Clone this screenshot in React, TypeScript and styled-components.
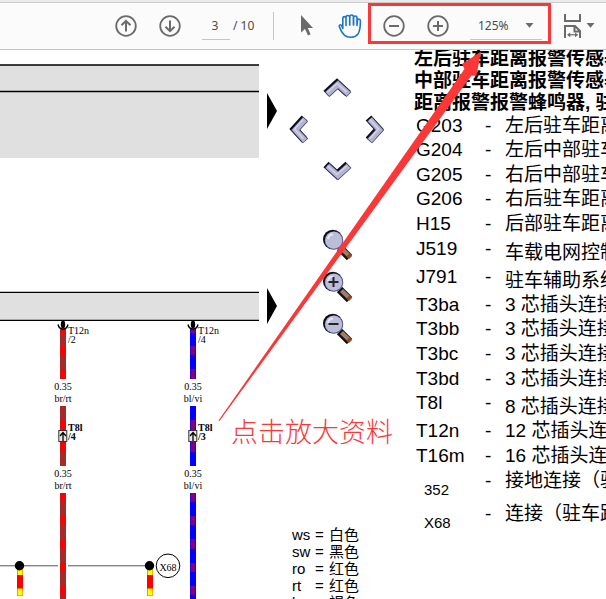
import React from "react";
import styled, { createGlobalStyle } from "styled-components";

const RED = "#fb3737";
const SANS = `"Liberation Sans", "Noto Sans CJK SC", sans-serif`;

const GlobalStyle = createGlobalStyle`
  *, *::before, *::after { box-sizing: border-box; }
  body { margin: 0; background: #fff; color: #000; font-family: ${SANS}; }
`;

const Viewer = styled.div`
  position: relative;
  display: flex;
  flex-direction: column;
  height: 100vh;
  overflow: hidden;
`;

const Toolbar = styled.header`
  display: flex;
  flex: none;
  align-items: center;
  height: 50px;
  padding-left: 115px;
  border-bottom: 1px solid #c6c6c6;
  background: #fbfbfb;
  box-shadow: inset 0 2px #ebebeb, inset 0 3px #cbcbcb;
  padding-top: 2px;
  font: 12px "Noto Sans", sans-serif;
  color: #4b4b4b;
`;

const ToolButton = styled.button<{ $gap?: number }>`
  display: flex;
  flex: none;
  align-items: center;
  justify-content: center;
  padding: 0;
  margin: 0 0 0 ${(p) => p.$gap ?? 0}px;
  border: 0;
  background: none;
  color: #6b6b6b;
`;

const PageField = styled.input`
  width: 28px;
  height: 28px;
  margin-left: 21px;
  padding: 0 2px 0 0;
  border: 0;
  border-bottom: 1px solid #c6c6c6;
  background: none;
  color: inherit;
  font: inherit;
  text-align: center;
`;

const PageTotal = styled.span`
  width: 41px;
  padding-left: 3px;
  white-space: nowrap;
`;

const Divider = styled.span`
  width: 1px;
  height: 28px;
  margin-left: 2px;
  background: #c6c6c6;
`;

const ZoomGroup = styled.div`
  display: flex;
  flex: none;
  align-items: center;
  align-self: flex-start;
  width: 183px;
  height: 41px;
  margin: 1px 0 0 6px;
  padding: 5px 6px 0 12px;
  border: 3px solid ${RED};
`;

const ZoomField = styled.label`
  display: grid;
  width: 72px;
  height: 28px;
  margin-left: 21px;
  border-bottom: 1px solid #c6c6c6;
  > * { grid-area: 1 / 1; align-self: center; }
  > svg { justify-self: end; margin-right: 8px; pointer-events: none; }
`;

const ZoomSelect = styled.select`
  width: 100%;
  height: 27px;
  padding: 0 0 0 8px;
  border: 0;
  appearance: none;
  background: none;
  color: inherit;
  font: 12px "Noto Sans", sans-serif;
`;

const Sheet = styled.main`
  display: grid;
  flex: 1;
  grid-template-columns: 282px 124px minmax(0, 1fr);
  min-height: 0;
  overflow: hidden;
`;

const Schematic = styled.svg`
  display: block;
  text { font: 10px "Liberation Serif", serif; }
  .strong { font-weight: bold; }
`;

const Controls = styled.section`
  display: flex;
  flex-direction: column;
  padding: 29px 0 0 4px;
`;

const PanPad = styled.nav`
  display: grid;
  grid-template: 20px 62px 20px / 28px 47px 28px;
  place-items: center;
`;

const PadButton = styled.button<{ $area: string }>`
  display: flex;
  grid-area: ${(p) => p.$area};
  padding: 0;
  border: 0;
  background: none;
`;

const Lenses = styled.div`
  display: flex;
  flex-direction: column;
  gap: 10px;
  margin: 48px 0 0 36px;
`;

const LensButton = styled.button`
  display: flex;
  width: 32px;
  padding: 0;
  border: 0;
  background: none;
`;

const ColorTable = styled.table`
  width: 80px;
  margin: 181px 0 0 6px;
  border-collapse: collapse;
  font-size: 15px;
  line-height: 17px;
  white-space: nowrap;
  td, th { height: 17px; padding: 0; font-weight: normal; text-align: left; }
  tr > :first-child { width: 23px; }
  tr > :nth-child(2) { width: 14px; }
`;

const Legend = styled.section`
  padding-left: 8px;
  overflow: hidden;
  white-space: nowrap;
`;

const LegendTitle = styled.h1`
  margin: -2px 0 0;
  font-size: 19px;
  font-weight: bold;
  line-height: 22px;
`;

const LegendTable = styled.table`
  width: 100%;
  table-layout: fixed;
  border-collapse: collapse;
  font-size: 19px;
  line-height: 24px;
`;

const CodeCol = styled.col`width: 71px;`;
const DashCol = styled.col`width: 20px;`;

const LegendRow = styled.tr<{ $height: number }>`
  height: ${(p) => p.$height}px;
  vertical-align: top;
`;

const Code = styled.th<{ $node?: boolean }>`
  padding: ${(p) => (p.$node ? "9px 0 0 10px" : "0 0 0 2px")};
  font-size: ${(p) => (p.$node ? 15 : 19)}px;
  line-height: ${(p) => (p.$node ? 24 : 23)}px;
  font-weight: normal;
  text-align: left;
`;

const Cell = styled.td<{ $low?: boolean }>`
  padding: ${(p) => (p.$low ? 4 : 0)}px 0 0;
`;

const Callout = styled.p`
  position: absolute;
  left: 231px;
  top: 413px;
  margin: 0;
  color: ${RED};
  font: 300 27px/36px "Noto Sans CJK SC", sans-serif;
  white-space: nowrap;
`;

const Pointer = styled.svg`
  position: absolute;
  left: 217px;
  top: 51px;
  pointer-events: none;
`;

const Caret = () => (
  <svg width="9" height="5" viewBox="0 0 9 5" aria-hidden="true">
    <path d="M0.5 0H8.5L4.5 4.8Z" fill="#6b6b6b" />
  </svg>
);

const CircleIcon = ({ d }: { d: string }) => (
  <svg width="22" height="22" viewBox="0 0 22 22" fill="none" stroke="currentColor" strokeWidth="2" aria-hidden="true">
    <circle cx="11" cy="11" r="9.8" strokeWidth="1.8" />
    <path d={d} />
  </svg>
);

const PointerIcon = () => (
  <svg width="14" height="22" viewBox="0 0 14 22" aria-hidden="true">
    <path d="M1 0V17.5L5 14L8 20.5L10.6 19.2L7.8 13H13Z" fill="currentColor" />
  </svg>
);

const HandIcon = () => (
  <svg width="24" height="26" viewBox="0 0 24 26" fill="none" stroke="#1d74c9" strokeWidth="1.6" strokeLinejoin="round" strokeLinecap="round" aria-hidden="true">
    <path d="M8 12.5V5.4C8 3 4.8 3 4.8 5.4V15.5L3.8 13C2.8 10.8 0.8 11.9 1.4 13.8C2.6 17.6 4.3 20.3 6.6 22.4C10 25.2 17 25 19.8 21.3C21.6 18.8 22.4 13.5 22.4 8C22.4 5.4 19.6 5.4 19.4 7.8L19 12.5V5C19 2.4 15.6 2.4 15.6 5V12M15.4 12V4C15.4 1.4 11.8 1.4 11.8 4V12M11.7 12V4.2C11.7 1.8 8 1.8 8 4.6" />
  </svg>
);

const FitIcon = () => (
  <svg width="20" height="26" viewBox="0 0 20 26" fill="none" stroke="currentColor" strokeWidth="2" aria-hidden="true">
    <path d="M2 1V8H17V1M2 25V13H12L17 18V25M11.5 13V18.5H17" />
    <path d="M5 21.8H14" strokeWidth="1.2" />
    <path d="M7.2 19.4L4 21.8L7.2 24.2ZM12 19.4L15.2 21.8L12 24.2Z" fill="currentColor" stroke="none" />
  </svg>
);

const turns = { up: 0, right: 90, down: 180, left: 270 };

const Chevron = ({ to }: { to: keyof typeof turns }) => {
  const upright = to === "up" || to === "down";
  const [w, h] = upright ? [30, 20] : [20, 30];
  const turn = `rotate(${turns[to]})`;
  return (
    <svg width={w} height={h} viewBox={`${-w / 2} ${-h / 2} ${w} ${h}`} overflow="visible" aria-hidden="true">
      <g fill="none">
        <g transform="translate(-1 -1)">
          <path d="M-11 5.5L0 -4.5L11 5.5" transform={turn} stroke="#0b0b12" strokeWidth="7.6" />
        </g>
        <path d="M-11 5.5L0 -4.5L11 5.5" transform={turn} stroke="#3c3c70" strokeWidth="7" />
        <path d="M-10.6 5.1L0 -4.5L10.6 5.1" transform={turn} stroke="#b4b4d2" strokeWidth="5.4" />
        <g transform="translate(-1 -1)">
          <path d="M-9.6 4.2L0 -4.5L9.6 4.2" transform={turn} stroke="#d2d2e4" strokeWidth="1.6" />
        </g>
      </g>
    </svg>
  );
};

const Lens = ({ sign }: { sign?: string }) => (
  <svg width="32" height="32" viewBox="0 0 32 32" aria-hidden="true">
    <path d="M17.5 18.5L27.5 28.5" stroke="#111" strokeWidth="7.5" />
    <path d="M19.5 19.5L28.8 28.5" stroke="#a17c68" strokeWidth="4.4" />
    <path d="M25.5 28.6L29 25" stroke="#8b4a1c" strokeWidth="3" />
    <circle cx="10.8" cy="10.5" r="9.8" fill="#0c0c14" />
    <circle cx="12" cy="11.5" r="9.3" fill="#5a5a9a" />
    <circle cx="11.7" cy="11.2" r="8.5" fill="#bcbdd7" />
    <path d="M6 10C6.5 7 8.5 5.5 11 5.5" fill="none" stroke="#e6e6f1" strokeWidth="2" />
    {sign && <path d={sign} fill="none" stroke="#24242e" strokeWidth="2" />}
  </svg>
);

type WireProps = { x: number; from: number; to: number; base: string; mark: string; bands: [number, number][] };

const Wire = ({ x, from, to, base, mark, bands }: WireProps) => (
  <g>
    <rect x={x - 3} y={from} width="6" height={to - from} fill={base} />
    {bands.map(([a, b]) => (
      <rect key={a} x={x - 2.4} y={a} width="4.8" height={b - a} fill={mark} />
    ))}
  </g>
);

const topBands: [number, number][] = [[329, 333], [346, 355], [369, 379]];
const midBands: [number, number][] = [[420, 430], [442, 452]];
const lowBands: [number, number][] = [[493, 502], [516, 525], [539, 549], [563, 572], [586, 595]];

const circuits = [
  { x: 63, base: "#a52a2a", mark: "#ff0000", name: "br/rt", pin: "/2", plug: "/4" },
  { x: 193, base: "#0000ff", mark: "#800080", name: "bl/vi", pin: "/4", plug: "/3" },
];

const Circuit = ({ x, base, mark, name, pin, plug }: (typeof circuits)[number]) => (
  <g>
    <Wire x={x} from={329} to={379} base={base} mark={mark} bands={topBands} />
    <Wire x={x} from={406} to={466} base={base} mark={mark} bands={midBands} />
    <Wire x={x} from={493} to={599} base={base} mark={mark} bands={lowBands} />
    <ellipse cx={x} cy="324.5" rx="2.2" ry="4" />
    <path d={`M${x - 5} 324.5Q${x - 4} 329 ${x} 329Q${x + 4} 329 ${x + 5} 324.5`} fill="none" stroke="#000" strokeWidth="1.4" />
    <text x={x + 5} y="334">T12n</text>
    <text x={x + 5} y="343">{pin}</text>
    <text x={x} y="390" textAnchor="middle">0.35</text>
    <text x={x} y="402" textAnchor="middle">{name}</text>
    <rect x={x - 4.2} y="430.5" width="8" height="11" fill="#e8e8e8" stroke="#333" />
    <path d={`M${x} 441V432M${x - 3} 436L${x} 432.5L${x + 3} 436`} fill="none" stroke="#000" strokeWidth="1.3" />
    <text x={x + 5} y="431" className="strong">T8l</text>
    <text x={x + 5} y="440" className="strong">{plug}</text>
    <text x={x} y="477" textAnchor="middle">0.35</text>
    <text x={x} y="489" textAnchor="middle">{name}</text>
  </g>
);

const WiringDiagram = () => (
  <Schematic width="282" height="549" viewBox="0 50 282 549" role="img" aria-label="Wiring diagram">
    <path d="M0 65H259V158H0ZM0 292H259V320H0Z" fill="#e0e0e0" />
    <path d="M0 65H259M0 91.5H259M0 292.4H259M0 320.4H259" stroke="#000" strokeWidth="1.3" />
    <path d="M267 93L277 111L267 129ZM267 288L277 306L267 324Z" />
    {circuits.map((c) => <Circuit key={c.name} {...c} />)}
    <path d="M0 565.8H58M68 565.8H150" stroke="#555" />
    {[20, 150].map((x) => (
      <g key={x}>
        <rect x={x - 3} y="569" width="6" height="27" fill="#ff7a00" />
        <rect x={x - 2.2} y="569" width="4.6" height="26.4" fill="#ffff00" />
        <rect x={x - 3} y="575" width="6" height="13.5" fill="#ff0000" />
        <circle cx={x - 0.5} cy="565.8" r="4.7" />
      </g>
    ))}
    <circle cx="168" cy="565.8" r="11.8" fill="none" stroke="#000" />
    <text x="168" y="571" textAnchor="middle">X68</text>
  </Schematic>
);

const colors = [["ws", "白色"], ["sw", "黑色"], ["ro", "红色"], ["rt", "红色"], ["br", "褐色"]];

type Part = { code: string; name: string; height: number; low?: boolean; node?: boolean };

const parts: Part[] = [
  { code: "G203", name: "左后驻车距离报警传感器", height: 24 },
  { code: "G204", name: "左后中部驻车距离报警传感器", height: 25 },
  { code: "G205", name: "右后中部驻车距离报警传感器", height: 24 },
  { code: "G206", name: "右后驻车距离报警传感器", height: 25 },
  { code: "H15", name: "后部驻车距离报警蜂鸣器", height: 25 },
  { code: "J519", name: "车载电网控制单元", height: 28, low: true },
  { code: "J791", name: "驻车辅助系统控制单元", height: 28, low: true },
  { code: "T3ba", name: "3 芯插头连接", height: 24 },
  { code: "T3bb", name: "3 芯插头连接", height: 25 },
  { code: "T3bc", name: "3 芯插头连接", height: 25 },
  { code: "T3bd", name: "3 芯插头连接", height: 24 },
  { code: "T8l", name: "8 芯插头连接", height: 28, low: true },
  { code: "T12n", name: "12 芯插头连接", height: 25 },
  { code: "T16m", name: "16 芯插头连接", height: 25 },
  { code: "352", name: "接地连接（驻车距离报警）", height: 33, node: true },
  { code: "X68", name: "连接（驻车距离报警）", height: 33, node: true },
];

export default function App() {
  return (
    <Viewer>
      <GlobalStyle />
      <Toolbar>
        <ToolButton aria-label="Previous page"><CircleIcon d="M11 16.5V6M6.5 10.3L11 5.8L15.5 10.3" /></ToolButton>
        <ToolButton $gap={22} aria-label="Next page"><CircleIcon d="M11 5.5V16M6.5 11.7L11 16.2L15.5 11.7" /></ToolButton>
        <PageField aria-label="Page" defaultValue="3" />
        <PageTotal>/ 10</PageTotal>
        <Divider />
        <ToolButton $gap={26} aria-label="Select"><PointerIcon /></ToolButton>
        <ToolButton $gap={24} aria-label="Pan"><HandIcon /></ToolButton>
        <ZoomGroup>
          <ToolButton aria-label="Zoom out"><CircleIcon d="M6 11H16" /></ToolButton>
          <ToolButton $gap={22} aria-label="Zoom in"><CircleIcon d="M6 11H16M11 6V16" /></ToolButton>
          <ZoomField>
            <ZoomSelect aria-label="Zoom level" defaultValue="125%">
              <option>100%</option>
              <option>125%</option>
              <option>150%</option>
            </ZoomSelect>
            <Caret />
          </ZoomField>
        </ZoomGroup>
        <ToolButton $gap={12} aria-label="Fit width"><FitIcon /></ToolButton>
        <ToolButton $gap={3} aria-label="Fit options"><Caret /></ToolButton>
      </Toolbar>
      <Sheet>
        <WiringDiagram />
        <Controls>
          <PanPad aria-label="Pan">
            <PadButton $area="1 / 2" aria-label="Up"><Chevron to="up" /></PadButton>
            <PadButton $area="2 / 1" aria-label="Left"><Chevron to="left" /></PadButton>
            <PadButton $area="2 / 3" aria-label="Right"><Chevron to="right" /></PadButton>
            <PadButton $area="3 / 2" aria-label="Down"><Chevron to="down" /></PadButton>
          </PanPad>
          <Lenses>
            <LensButton aria-label="Reset zoom"><Lens /></LensButton>
            <LensButton aria-label="Enlarge"><Lens sign="M6.5 11H16.5M11.5 6V16" /></LensButton>
            <LensButton aria-label="Reduce"><Lens sign="M6.5 11H16.5" /></LensButton>
          </Lenses>
          <ColorTable>
            <tbody>
              {colors.map(([code, name]) => (
                <tr key={code}><th scope="row">{code}</th><td>=</td><td>{name}</td></tr>
              ))}
            </tbody>
          </ColorTable>
        </Controls>
        <Legend>
          <LegendTitle>
            左后驻车距离报警传感器<br />中部驻车距离报警传感器<br />距离报警报警蜂鸣器, 驻车
          </LegendTitle>
          <LegendTable>
            <colgroup><CodeCol /><DashCol /><col /></colgroup>
            <tbody>
              {parts.map((p) => (
                <LegendRow key={p.code} $height={p.height}>
                  <Code scope="row" $node={p.node}>{p.code}</Code>
                  <Cell>-</Cell>
                  <Cell $low={p.low}>{p.name}</Cell>
                </LegendRow>
              ))}
            </tbody>
          </LegendTable>
        </Legend>
      </Sheet>
      <Callout>点击放大资料</Callout>
      <Pointer width="266" height="371" viewBox="217 51 266 371" aria-hidden="true">
        <path d="M218.5 420.5L464.5 69L462 64L481 51.5L476.5 75.5L471.5 75.5L219.5 421Z" fill={RED} />
      </Pointer>
    </Viewer>
  );
}
